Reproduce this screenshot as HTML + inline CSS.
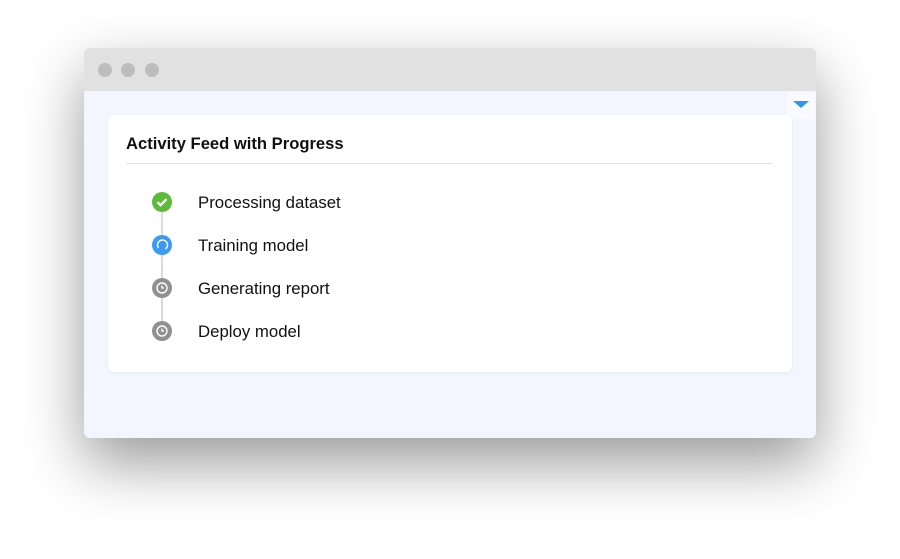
<!DOCTYPE html><html><head><style>
body{margin:0;width:900px;height:559px;background:#fff;font-family:"Liberation Sans",sans-serif;position:relative;overflow:hidden}
.win{position:absolute;left:84px;top:48px;width:732px;height:390px;border-radius:6px;overflow:hidden;box-shadow:0 25px 60px rgba(0,0,0,.4);background:#f3f6fe}
.bar{height:43px;background:#e1e1e1;position:relative}
.dot{position:absolute;top:15px;width:14px;height:14px;border-radius:50%;background:#bdbdbd}
.card{position:absolute;left:24px;top:67px;width:684px;height:257px;background:#fff;border-radius:6px;box-shadow:0 1px 3px rgba(0,0,0,.06)}
h1{position:absolute;left:18px;top:19px;margin:0;font-size:16.6px;font-weight:bold;color:#111}
.hr{position:absolute;left:18px;right:19px;top:48px;height:1px;background:#e3e3e3}
.line{position:absolute;left:53px;top:88px;width:2px;height:128px;background:#dcdcdc}
.it{position:absolute;left:90px;font-size:16.8px;color:#111}
.ic{position:absolute;left:44px;width:20px;height:20px}
.tri{position:absolute;left:703px;top:44px;width:28px;height:27px;background:#f8faff}
</style></head><body>
<div class="win">
<div class="bar"><div class="dot" style="left:14px"></div><div class="dot" style="left:37px"></div><div class="dot" style="left:61px"></div></div>
<div class="tri"><svg width="28" height="27"><path d="M6 9h16l-8 7z" fill="#2f95f0"/></svg></div>
<div class="card">
<h1>Activity Feed with Progress</h1><div class="hr"></div>
<div class="line"></div>
<svg class="ic" style="top:77px" viewBox="0 0 20 20"><circle cx="10" cy="10" r="10" fill="#5dbb3c"/><path d="M5.5 10.2l3 3 6-6" stroke="#fff" stroke-width="2.4" fill="none"/></svg>
<div class="it" style="top:78px">Processing dataset</div>
<svg class="ic" style="top:120px" viewBox="0 0 20 20"><circle cx="10" cy="10" r="10" fill="#3d9af2"/><path d="M6.5 13A5 5 0 1 1 13.5 14" stroke="#fff" stroke-width="1.4" fill="none"/></svg>
<div class="it" style="top:121px">Training model</div>
<svg class="ic" style="top:163px" viewBox="0 0 20 20"><circle cx="10" cy="10" r="10" fill="#909090"/><circle cx="10" cy="10" r="5" stroke="#fff" stroke-width="1.4" fill="none"/><path d="M10 7.5V10h2" stroke="#fff" stroke-width="1.3" fill="none"/></svg>
<div class="it" style="top:164px">Generating report</div>
<svg class="ic" style="top:206px" viewBox="0 0 20 20"><circle cx="10" cy="10" r="10" fill="#909090"/><circle cx="10" cy="10" r="5" stroke="#fff" stroke-width="1.4" fill="none"/><path d="M10 7.5V10h2" stroke="#fff" stroke-width="1.3" fill="none"/></svg>
<div class="it" style="top:207px">Deploy model</div>
</div></div>
</body></html>
